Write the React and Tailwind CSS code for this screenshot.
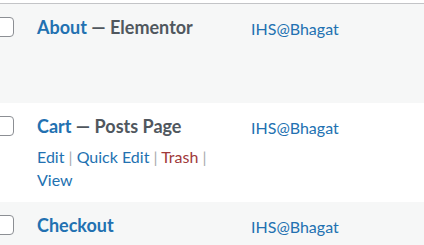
import React from 'react';

const rows = [
  { title: 'About', state: 'Elementor', author: 'IHS@Bhagat', actions: false, alt: true },
  { title: 'Cart', state: 'Posts Page', author: 'IHS@Bhagat', actions: true, alt: false },
  { title: 'Checkout', state: null, author: 'IHS@Bhagat', actions: false, alt: true },
];

function Row({ row }) {
  return (
    <div className={`flex h-[99px] ${row.alt ? 'bg-[#f6f7f7]' : 'bg-white'}`}>
      {/* checkbox column */}
      <div className="pt-[13px] -ml-[6px]">
        <div className="w-5 h-5 rounded-[4px] border border-[#8c8f94] bg-white" />
      </div>

      {/* title column */}
      <div className="ml-[23px] w-[190px] pt-[11px]">
        <div className="text-[18px] leading-6 font-bold text-[#50575e] whitespace-nowrap">
          <a className="text-[#2271b1]">{row.title}</a>
          {row.state && <span> — {row.state}</span>}
        </div>
        {row.actions && (
          <div className="mt-[7px] text-[16px] leading-[23px] text-[#a7aaad]">
            <a className="text-[#2271b1]">Edit</a> | <a className="text-[#2271b1]">Quick Edit</a> |{' '}
            <a className="text-[#a0393a]">Trash</a> | <a className="text-[#2271b1]">View</a>
          </div>
        )}
      </div>

      {/* author column */}
      <div className="ml-[24px] pt-[13px] text-[16px] leading-6 text-[#2271b1]">
        <a>{row.author}</a>
      </div>
    </div>
  );
}

export default function App() {
  return (
    <div className="w-[424px] h-[245px] overflow-hidden bg-white pt-[3px]" style={{ fontFamily: 'Lato, "Open Sans", sans-serif' }}>
      <div className="border-t border-[#c3c4c7]">
        {rows.map(row => (
          <Row key={row.title} row={row} />
        ))}
      </div>
    </div>
  );
}
